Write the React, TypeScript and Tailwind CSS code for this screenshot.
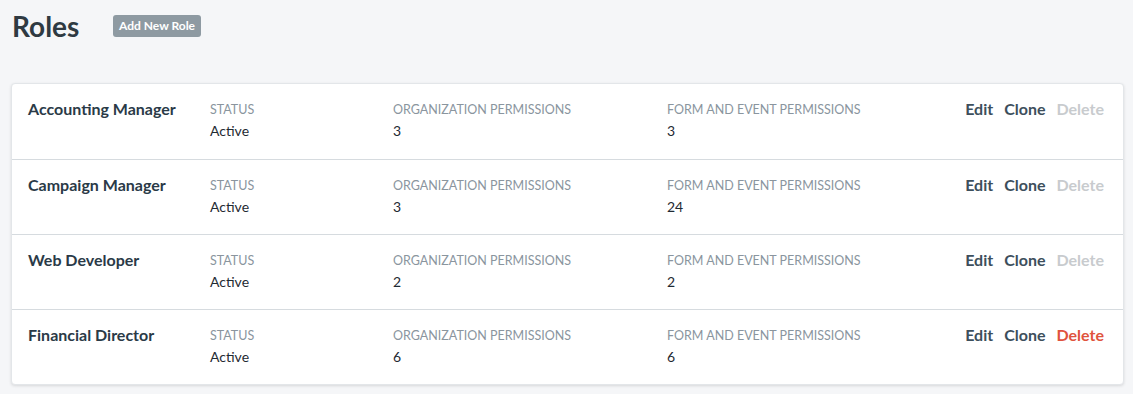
const roles = [
  { name: "Accounting Manager", status: "Active", org: 3, form: 3, canDelete: false },
  { name: "Campaign Manager", status: "Active", org: 3, form: 24, canDelete: false },
  { name: "Web Developer", status: "Active", org: 2, form: 2, canDelete: false },
  { name: "Financial Director", status: "Active", org: 6, form: 6, canDelete: true },
];

function Field({ label, value, width }: { label: string; value: string | number; width: string }) {
  return (
    <div className={`${width} shrink-0`}>
      <p className="text-[12.5px] leading-[16px] uppercase text-[#8a959e] pt-[2px]">{label}</p>
      <p className="text-[14px] leading-[16px] mt-[5px] text-[#1f2a33]">{value}</p>
    </div>
  );
}

export default function App() {
  return (
    <div
      className="min-h-[394px] bg-[#f5f6f8] pl-[11px] pr-[9px] pt-[11px] pb-[11px]"
      style={{ fontFamily: "Lato, 'Open Sans', sans-serif" }}
    >
      {/* Header */}
      <div className="flex items-center h-[30px]">
        <h1 className="text-[28px] font-bold text-[#2f3a42] leading-none pl-[1px] w-[102px]">Roles</h1>
        <button className="h-[22px] px-[6px] rounded-[3px] bg-[#8e9aa2] text-white text-[12px] font-bold">
          Add New Role
        </button>
      </div>

      {/* Roles list */}
      <div className="mt-[42px] bg-white rounded-[4px] border border-[#e3e6e9] shadow-[0_1px_3px_rgba(0,0,0,0.12)]">
        {roles.map((role, i) => (
          <div
            key={role.name}
            className={`flex items-start h-[75px] pl-[16px] pr-[19px] pt-[16px] ${i > 0 ? "border-t border-[#d6dbdf]" : ""}`}
          >
            <div className="w-[182px] shrink-0 text-[16px] leading-[18px] font-bold text-[#2a3a47]">
              {role.name}
            </div>
            <Field label="Status" value={role.status} width="w-[183px]" />
            <Field label="Organization Permissions" value={role.org} width="w-[274px]" />
            <Field label="Form and Event Permissions" value={role.form} width="w-[200px]" />
            <div className="flex-1 flex items-start justify-end gap-[11px] text-[16px] leading-[18px] font-bold">
              <button className="text-[#3d4f5c]">Edit</button>
              <button className="text-[#3d4f5c]">Clone</button>
              <button className={role.canDelete ? "text-[#e0533d]" : "text-[#c8cbce]"}>Delete</button>
            </div>
          </div>
        ))}
      </div>
    </div>
  );
}
